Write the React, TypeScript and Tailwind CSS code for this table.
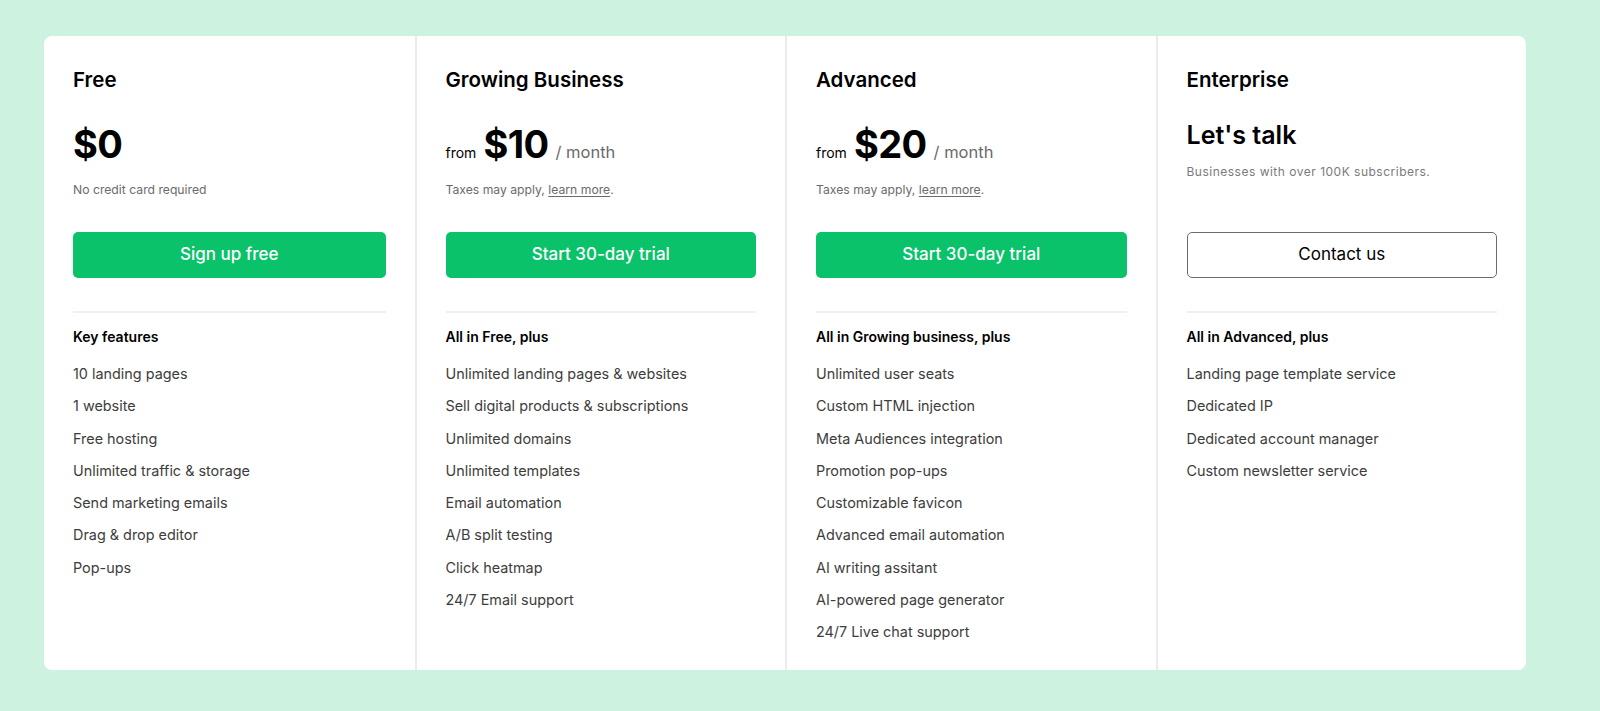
type Plan = {
  name: string;
  price: React.ReactNode;
  note: React.ReactNode;
  cta: string;
  outline?: boolean;
  heading: string;
  features: string[];
};

function FromPrice({ amount }: { amount: string }) {
  return (
    <div className="mt-[30px] flex h-[40px] items-baseline gap-[7px] leading-[40px]">
      <span className="text-[14px] text-black">from</span>
      <span className="text-[38px] font-bold tracking-[-0.6px] text-black">{amount}</span>
      <span className="text-[16.5px] text-[#6b6b6b]">/ month</span>
    </div>
  );
}

function TaxNote() {
  return (
    <p className="mt-[18px] text-[12.2px] leading-[16px] text-[#6b6b6b]">
      Taxes may apply, <span className="underline underline-offset-2">learn more</span>.
    </p>
  );
}

const plans: Plan[] = [
  {
    name: "Free",
    price: (
      <div className="mt-[30px] h-[40px] text-[38px] font-bold leading-[40px] tracking-[-0.6px] text-black">
        $0
      </div>
    ),
    note: (
      <p className="mt-[18px] text-[12.2px] leading-[16px] text-[#6b6b6b]">No credit card required</p>
    ),
    cta: "Sign up free",
    heading: "Key features",
    features: [
      "10 landing pages",
      "1 website",
      "Free hosting",
      "Unlimited traffic & storage",
      "Send marketing emails",
      "Drag & drop editor",
      "Pop-ups",
    ],
  },
  {
    name: "Growing Business",
    price: <FromPrice amount="$10" />,
    note: <TaxNote />,
    cta: "Start 30-day trial",
    heading: "All in Free, plus",
    features: [
      "Unlimited landing pages & websites",
      "Sell digital products & subscriptions",
      "Unlimited domains",
      "Unlimited templates",
      "Email automation",
      "A/B split testing",
      "Click heatmap",
      "24/7 Email support",
    ],
  },
  {
    name: "Advanced",
    price: <FromPrice amount="$20" />,
    note: <TaxNote />,
    cta: "Start 30-day trial",
    heading: "All in Growing business, plus",
    features: [
      "Unlimited user seats",
      "Custom HTML injection",
      "Meta Audiences integration",
      "Promotion pop-ups",
      "Customizable favicon",
      "Advanced email automation",
      "AI writing assitant",
      "AI-powered page generator",
      "24/7 Live chat support",
    ],
  },
  {
    name: "Enterprise",
    price: (
      <div className="mt-[26px] h-[30px] text-[25px] font-semibold leading-[30px] text-black">Let's talk</div>
    ),
    note: (
      <p className="mt-[14px] text-[12px] leading-[16px] tracking-[0.5px] text-[#7a7a7a]">
        Businesses with over 100K subscribers.
      </p>
    ),
    cta: "Contact us",
    outline: true,
    heading: "All in Advanced, plus",
    features: [
      "Landing page template service",
      "Dedicated IP",
      "Dedicated account manager",
      "Custom newsletter service",
    ],
  },
];

function PlanColumn({ plan, first }: { plan: Plan; first: boolean }) {
  return (
    <div className={first ? "px-[29px]" : "border-l-2 border-[#e9ebf0] px-[29px]"}>
      <div className="h-[196px] pt-[30px]">
        <h2 className="text-[20.5px] font-semibold leading-[28px] text-black">{plan.name}</h2>
        {plan.price}
        {plan.note}
      </div>
      <button
        type="button"
        className={
          plan.outline
            ? "flex h-[46px] w-full items-center justify-center rounded-[5px] border border-[#6b6b6b] bg-white text-[17px] text-black"
            : "flex h-[46px] w-full items-center justify-center rounded-[5px] bg-[#09c269] text-[17px] font-medium text-white"
        }
      >
        {plan.cta}
      </button>
      <div className="mt-[33px] border-t-2 border-[#eef0f3]" />
      <h3 className="mt-[14px] text-[14px] font-semibold leading-[20px] text-black">{plan.heading}</h3>
      <ul className="mt-[11px]">
        {plan.features.map((f) => (
          <li key={f} className="text-[14.4px] leading-[32.3px] text-[#3d3d3d]">
            {f}
          </li>
        ))}
      </ul>
    </div>
  );
}

export default function App() {
  return (
    <div className="h-[711px] w-[1600px] bg-[#cdf2e0] pl-[44px] pt-[36px] font-['Inter','Noto_Sans',sans-serif]">
      <div className="grid h-[634px] w-[1482px] grid-cols-4 overflow-hidden rounded-[8px] bg-white">
        {plans.map((p, i) => (
          <PlanColumn key={p.name} plan={p} first={i === 0} />
        ))}
      </div>
    </div>
  );
}
